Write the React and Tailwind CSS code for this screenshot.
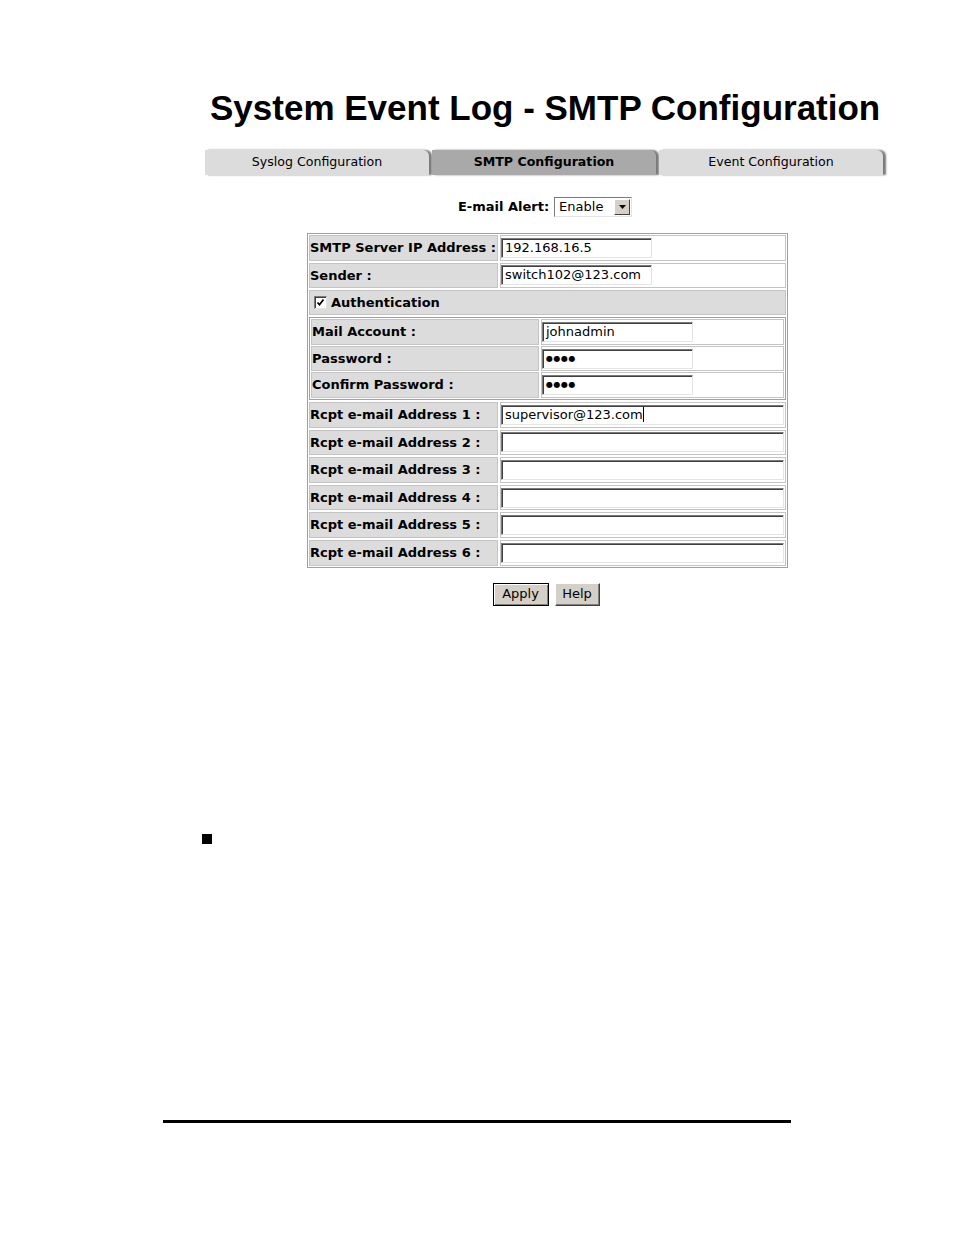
import React from "react";

const inputCls =
  "h-[20px] bg-white border border-t-[#7a7a7a] border-l-[#7a7a7a] border-b-[#e4e4e4] border-r-[#e4e4e4] shadow-[inset_1px_1px_0_#404040] px-[3px] text-[13px] leading-[18px] text-black";

const Row = ({ label, value, labelW, inputW, password, caret }) => (
  <div className="flex gap-[2px]">
    <div
      className={`${labelW} h-[25.6px] bg-[#dcdcdc] border border-[#c4c4c4] flex items-center font-bold text-[13px] text-black whitespace-nowrap`}
    >
      {label}
    </div>
    <div className="flex-1 h-[25.6px] bg-white border border-[#c4c4c4] flex items-center">
      <div className={`${inputCls} ${inputW} flex items-center`}>
        {password ? (
          <span className="text-[8px] tracking-[0.5px]">●●●●</span>
        ) : (
          <span>{value}</span>
        )}
        {caret && <span className="w-px h-[15px] bg-black" />}
      </div>
    </div>
  </div>
);

const Tab = ({ label, active }) => (
  <div className="flex-1 flex h-[25px]">
    <div
      className={`flex-1 flex items-center justify-center rounded-tr-[6px] text-[12.6px] shadow-[3px_0_2px_#7a7a7a] ${
        active ? "bg-[#a9a9a9] font-bold" : "bg-[#dcdcdc]"
      }`}
    >
      {label}
    </div>
  </div>
);

export default function App() {
  const rcpt = [1, 2, 3, 4, 5, 6];
  return (
    <div
      className="w-[954px] h-[1235px] bg-white text-black"
      style={{ fontFamily: '"DejaVu Sans", Verdana, sans-serif' }}
    >
      <div className="pt-[86px] pl-[210px]">
        <h1
          className="text-[35px] font-bold leading-[44px]"
          style={{ fontFamily: '"Liberation Sans", Arial, sans-serif' }}
        >
          System Event Log - SMTP Configuration
        </h1>
      </div>

      <div className="ml-[205px] w-[680px] flex flex-col items-center">
        <div className="mt-[20px] w-[678px] self-start flex gap-[3px]">
          <Tab label="Syslog Configuration" />
          <Tab label="SMTP Configuration" active />
          <Tab label="Event Configuration" />
        </div>

        <div className="mt-[22px] flex items-center gap-[5px]">
          <span className="font-bold text-[13px]">E-mail Alert:</span>
          <div className="h-[20px] w-[78px] border border-t-[#7a7a7a] border-l-[#7a7a7a] border-b-[#e4e4e4] border-r-[#e4e4e4] flex items-center pl-[4px] text-[13px] bg-white">
            <span className="flex-1">Enable</span>
            <div className="w-[16px] h-[16px] mr-px bg-[#d4d0c8] border border-t-white border-l-white border-b-[#404040] border-r-[#404040] flex items-center justify-center">
              <svg width="7" height="4" viewBox="0 0 7 4">
                <path d="M0 0h7L3.5 4z" fill="#000" />
              </svg>
            </div>
          </div>
        </div>

        <div className="mt-[16px] w-[481px] border border-[#a0a0a0] p-px flex flex-col gap-[2px] ml-[5px]">
          <Row
            label="SMTP Server IP Address :"
            value="192.168.16.5"
            labelW="w-[189px]"
            inputW="w-[151px]"
          />
          <Row
            label="Sender :"
            value="switch102@123.com"
            labelW="w-[189px]"
            inputW="w-[151px]"
          />
          <div className="h-[25px] bg-[#dcdcdc] border border-[#c4c4c4] flex items-center pl-[4px] gap-[4px] font-bold text-[13px]">
            <div className="w-[13px] h-[13px] bg-white border border-t-[#7a7a7a] border-l-[#7a7a7a] border-b-[#e4e4e4] border-r-[#e4e4e4] shadow-[inset_1px_1px_0_#404040] flex items-center justify-center">
              <svg width="9" height="9" viewBox="0 0 9 9">
                <path d="M1.5 4.5l2 2.2 4-5.2" stroke="#000" strokeWidth="1.8" fill="none" />
              </svg>
            </div>
            Authentication
          </div>
          <div className="border border-[#a0a0a0] p-px flex flex-col gap-px">
            <Row
              label="Mail Account :"
              value="johnadmin"
              labelW="w-[228px]"
              inputW="w-[151px]"
            />
            <Row label="Password :" password labelW="w-[228px]" inputW="w-[151px]" />
            <Row
              label="Confirm Password :"
              password
              labelW="w-[228px]"
              inputW="w-[151px]"
            />
          </div>
          {rcpt.map((n) => (
            <Row
              key={n}
              label={`Rcpt e-mail Address ${n} :`}
              value={n === 1 ? "supervisor@123.com" : ""}
              caret={n === 1}
              labelW="w-[189px]"
              inputW="w-[283px]"
            />
          ))}
        </div>

        <div className="mt-[15px] flex gap-[6px] ml-[2px]">
          <button className="h-[23px] w-[56px] bg-[#d4d0c8] border border-black shadow-[inset_1px_1px_0_#fff,inset_-1px_-1px_0_#808080] text-[13px]">
            Apply
          </button>
          <button className="h-[23px] w-[45px] bg-[#d4d0c8] border border-t-white border-l-white border-b-[#404040] border-r-[#404040] shadow-[inset_-1px_-1px_0_#808080] text-[13px]">
            Help
          </button>
        </div>
      </div>

      <div className="ml-[202px] mt-[228px] w-[10px] h-[10px] bg-black" />

      <div className="ml-[163px] mt-[276px] w-[628px] h-[3px] bg-black" />
    </div>
  );
}
